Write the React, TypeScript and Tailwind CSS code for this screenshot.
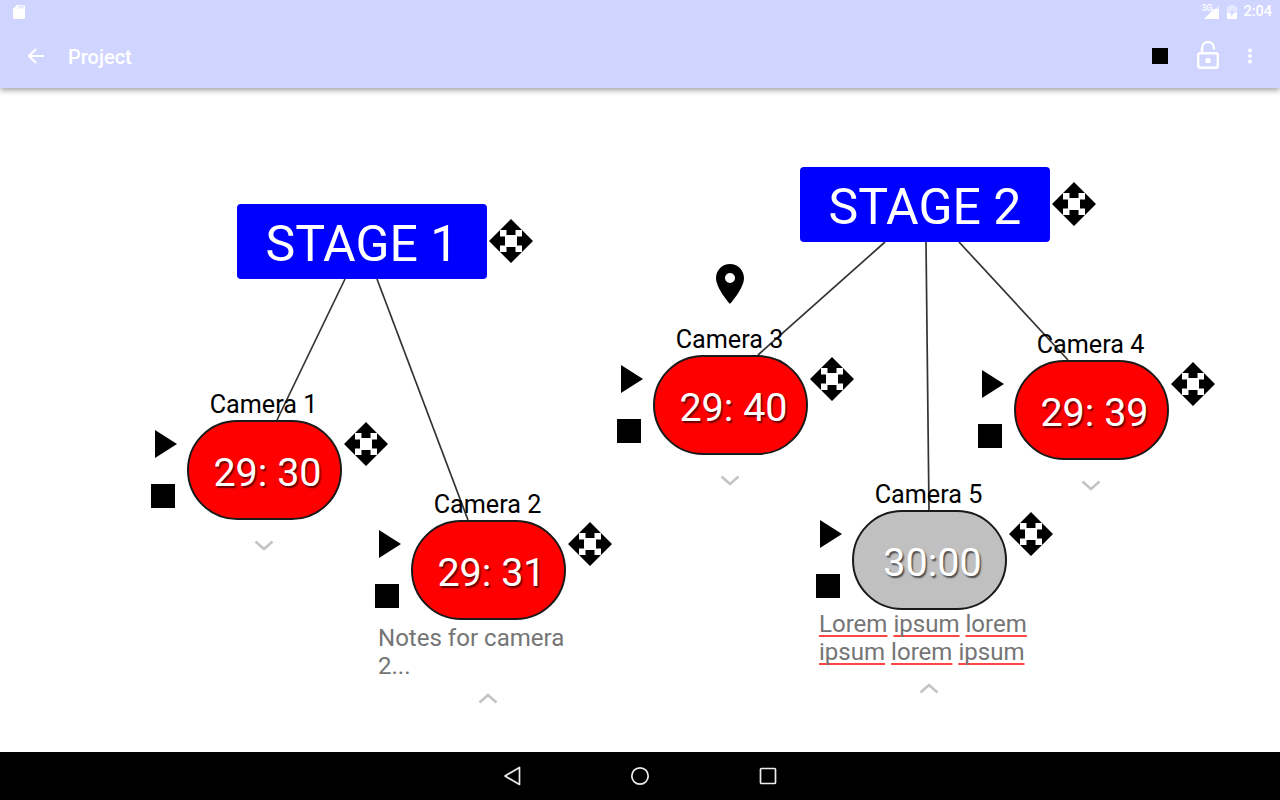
import React from "react";

function Move({ className = "" }: { className?: string }) {
  return (
    <svg width="44" height="44" viewBox="0 0 44 44" className={className}>
      <g fill="#000">
        <path d="M22 0L33 11H26.500V16H17.500V11H11Z" />
        <path d="M22 44L33 33H26.500V28H17.500V33H11Z" />
        <path d="M0 22L11 11V17.500H16V26.500H11V33Z" />
        <path d="M44 22L33 11V17.500H28V26.500H33V33Z" />
      </g>
    </svg>
  );
}

function Chevron({ up = false, className = "" }: { up?: boolean; className?: string }) {
  return (
    <svg width="20" height="12" viewBox="0 0 20 12" className={className}>
      <path d={up ? "M1.500 10.500L10 3L18.500 10.500" : "M1.500 1.500L10 9L18.500 1.500"} fill="none" stroke="#c4c4c4" strokeWidth="2.600" />
    </svg>
  );
}

type CamProps = {
  name: string;
  time: string;
  pos: string;
  grey?: boolean;
  notes?: React.ReactNode;
  tight?: boolean;
};

function Camera({ name, time, pos, grey, notes, tight }: CamProps) {
  return (
    <div className={`absolute w-[240px] ${pos}`}>
      <div className="ml-[36px] w-[153px] h-7 mb-[2px] pt-[1px] flex justify-center text-black text-[25.2px] leading-7 whitespace-nowrap">{name}</div>
      <div className="flex items-start">
        <div className="w-[36px] flex flex-col pt-[10px]">
          <svg width="22" height="28" viewBox="0 0 22 28" className="ml-1 block">
            <path d="M0 0L22 14L0 28Z" fill="#000" />
          </svg>
          <div className="w-6 h-6 bg-black mt-[26px]" />
        </div>
        <div
          className={`w-[155px] h-[100px] pl-[6px] pt-[6px] rounded-[50px] border-2 border-[#1a1a1a] flex items-center justify-center text-white text-[39.5px] leading-none whitespace-nowrap [text-shadow:1.5px_1.5px_1.5px_rgba(0,0,0,0.6)] ${grey ? "bg-[#c0c0c0]" : "bg-[#ff0000]"}`}
        >
          {time}
        </div>
        <Move className="ml-[2px] mt-[2px]" />
      </div>
      {notes ? (
        <>
          <div className={`ml-[3px] w-[212px] h-14 text-[24.05px] leading-7 text-[#757575] ${tight ? "" : "mt-[4px]"}`}>{notes}</div>
          <Chevron up className={`ml-[103px] ${tight ? "mt-[16px]" : "mt-[12px]"}`} />
        </>
      ) : (
        <Chevron className="ml-[103px] mt-[20px]" />
      )}
    </div>
  );
}

function Stage({ name, pos }: { name: string; pos: string }) {
  return (
    <div className={`absolute flex items-start gap-[2px] ${pos}`}>
      <div className="w-[250px] h-[75px] pt-[4px] rounded bg-[#0000ff] text-white text-[50px] leading-none flex items-center justify-center whitespace-nowrap">
        {name}
      </div>
      <Move className="mt-[15px]" />
    </div>
  );
}

const spell = "underline decoration-[#ff4444] decoration-2 underline-offset-[3px] [text-decoration-skip-ink:none]";

export default function App() {
  return (
    <div className="w-[1280px] h-[800px] flex flex-col overflow-hidden bg-white font-['Roboto',sans-serif]">
      <header className="relative z-10 h-[88px] shrink-0 bg-[#d0d5ff] shadow-[0_2px_6px_rgba(0,0,0,0.4)] flex flex-col">
        <div className="h-6 flex items-center justify-between pl-[13px] pr-2">
          <svg width="12" height="14" viewBox="0 0 12 14">
            <path d="M4 0H10.500A1.500 1.500 0 0 1 12 1.500V12.500A1.500 1.500 0 0 1 10.500 14H1.500A1.500 1.500 0 0 1 0 12.500V4Z" fill="#fff" />
            <path d="M6 .5V3.500M8 .5V3.500M10 .5V3.500" stroke="#d0d5ff" strokeWidth="1" />
          </svg>
          <div className="flex items-center text-white">
            <div className="relative w-[18px] h-[14px]">
              <svg width="18" height="14" viewBox="0 0 18 14" className="absolute left-0 top-0">
                <path d="M17 0V14H2Z" fill="#fff" fillOpacity="0.4" />
                <path d="M17 4V14H2L12 4Z" fill="#fff" />
              </svg>
              <span className="absolute -left-[1px] -top-[1px] text-[9px] leading-[9px] font-medium">3G</span>
            </div>
            <svg width="10" height="14" viewBox="0 0 10 14" className="ml-[7px]">
              <path d="M3 0H7V1.500H10V14H0V1.500H3Z" fill="#fff" fillOpacity="0.45" />
              <path d="M0 8H10V14H0Z" fill="#fff" />
              <path d="M6 3L2.500 8.500H4.500L4 12L7.500 6.500H5.500Z" fill="#d0d5ff" />
            </svg>
            <span className="ml-[6px] text-[14.5px] leading-none font-medium">2:04</span>
          </div>
        </div>
        <div className="h-16 flex items-center pl-[28px]">
          <svg width="16" height="16" viewBox="0 0 16 16" className="-mt-[1px]">
            <path d="M16 8H1.500M8 1L1 8L8 15" fill="none" stroke="#fff" strokeWidth="2" />
          </svg>
          <span className="ml-[24px] pt-[2px] text-[20px] font-medium text-white">Project</span>
          <div className="ml-auto w-4 h-4 bg-black" />
          <svg width="22" height="28" viewBox="0 0 22 28" className="ml-[29px] -mt-[2px]">
            <path d="M5 11V7.500C5 3.500 7.500 1 11 1S17 3.500 17 7.500V8.500" fill="none" stroke="#fff" strokeWidth="2.400" />
            <rect x="1.200" y="12.200" width="19.600" height="14.600" rx="2" fill="none" stroke="#fff" strokeWidth="2.400" />
            <circle cx="11" cy="19.500" r="2.800" fill="#fff" />
          </svg>
          <svg width="4" height="16" viewBox="0 0 4 16" className="ml-[29px] mr-[28px]">
            <circle cx="2" cy="2.500" r="1.900" fill="#fff" />
            <circle cx="2" cy="8" r="1.900" fill="#fff" />
            <circle cx="2" cy="13.500" r="1.900" fill="#fff" />
          </svg>
        </div>
      </header>

      <main className="relative flex-1 overflow-hidden">
        <svg width="1280" height="664" viewBox="0 88 1280 664" className="absolute left-0 top-0">
          <g stroke="#333" strokeWidth="1.700" fill="none">
            <path d="M345 279L277 420" />
            <path d="M377 279L468 520" />
            <path d="M885 242L758 355" />
            <path d="M926 242L929 510" />
            <path d="M959 242L1068 360" />
          </g>
        </svg>

        <Stage name="STAGE 1" pos="left-[237px] top-[116px]" />
        <Stage name="STAGE 2" pos="left-[800px] top-[79px]" />

        <svg width="28" height="40" viewBox="0 0 28 40" className="absolute left-[716px] top-[176px]">
          <path
            fillRule="evenodd"
            d="M14 0C6.300 0 0 6.200 0 14C0 24.500 14 40 14 40S28 24.500 28 14C28 6.200 21.700 0 14 0ZM14 9A5 5 0 1 1 14 19A5 5 0 1 1 14 9Z"
            fill="#000"
          />
        </svg>

        <Camera name="Camera 1" time="29: 30" pos="left-[151px] top-[302px]" />
        <Camera
          name="Camera 2"
          time="29: 31"
          pos="left-[375px] top-[402px]"
          notes={<>Notes for camera 2...</>}
        />
        <Camera name="Camera 3" time="29: 40" pos="left-[617px] top-[237px]" />
        <Camera name="Camera 4" time="29: 39" pos="left-[978px] top-[242px]" />
        <Camera
          name="Camera 5"
          time="30:00"
          grey
          tight
          pos="left-[816px] top-[392px]"
          notes={
            <>
              <span className={spell}>Lorem</span> <span className={spell}>ipsum</span>{" "}
              <span className={spell}>lorem</span> <span className={spell}>ipsum</span>{" "}
              <span className={spell}>lorem</span> <span className={spell}>ipsum</span>
            </>
          }
        />
      </main>

      <nav className="h-12 shrink-0 bg-black flex items-center justify-center">
        <svg width="20" height="20" viewBox="0 0 20 20" className="-ml-[2px]">
          <path d="M17.500 1.500V18.500L3 10Z" fill="none" stroke="#eee" strokeWidth="1.700" strokeLinejoin="round" />
        </svg>
        <svg width="20" height="20" viewBox="0 0 20 20" className="ml-[108px]">
          <circle cx="10" cy="10" r="8.200" fill="none" stroke="#eee" strokeWidth="1.700" />
        </svg>
        <svg width="18" height="18" viewBox="0 0 18 18" className="ml-[109px]">
          <rect x="1.500" y="1.500" width="15" height="15" rx="1" fill="none" stroke="#eee" strokeWidth="1.700" />
        </svg>
      </nav>
    </div>
  );
}
